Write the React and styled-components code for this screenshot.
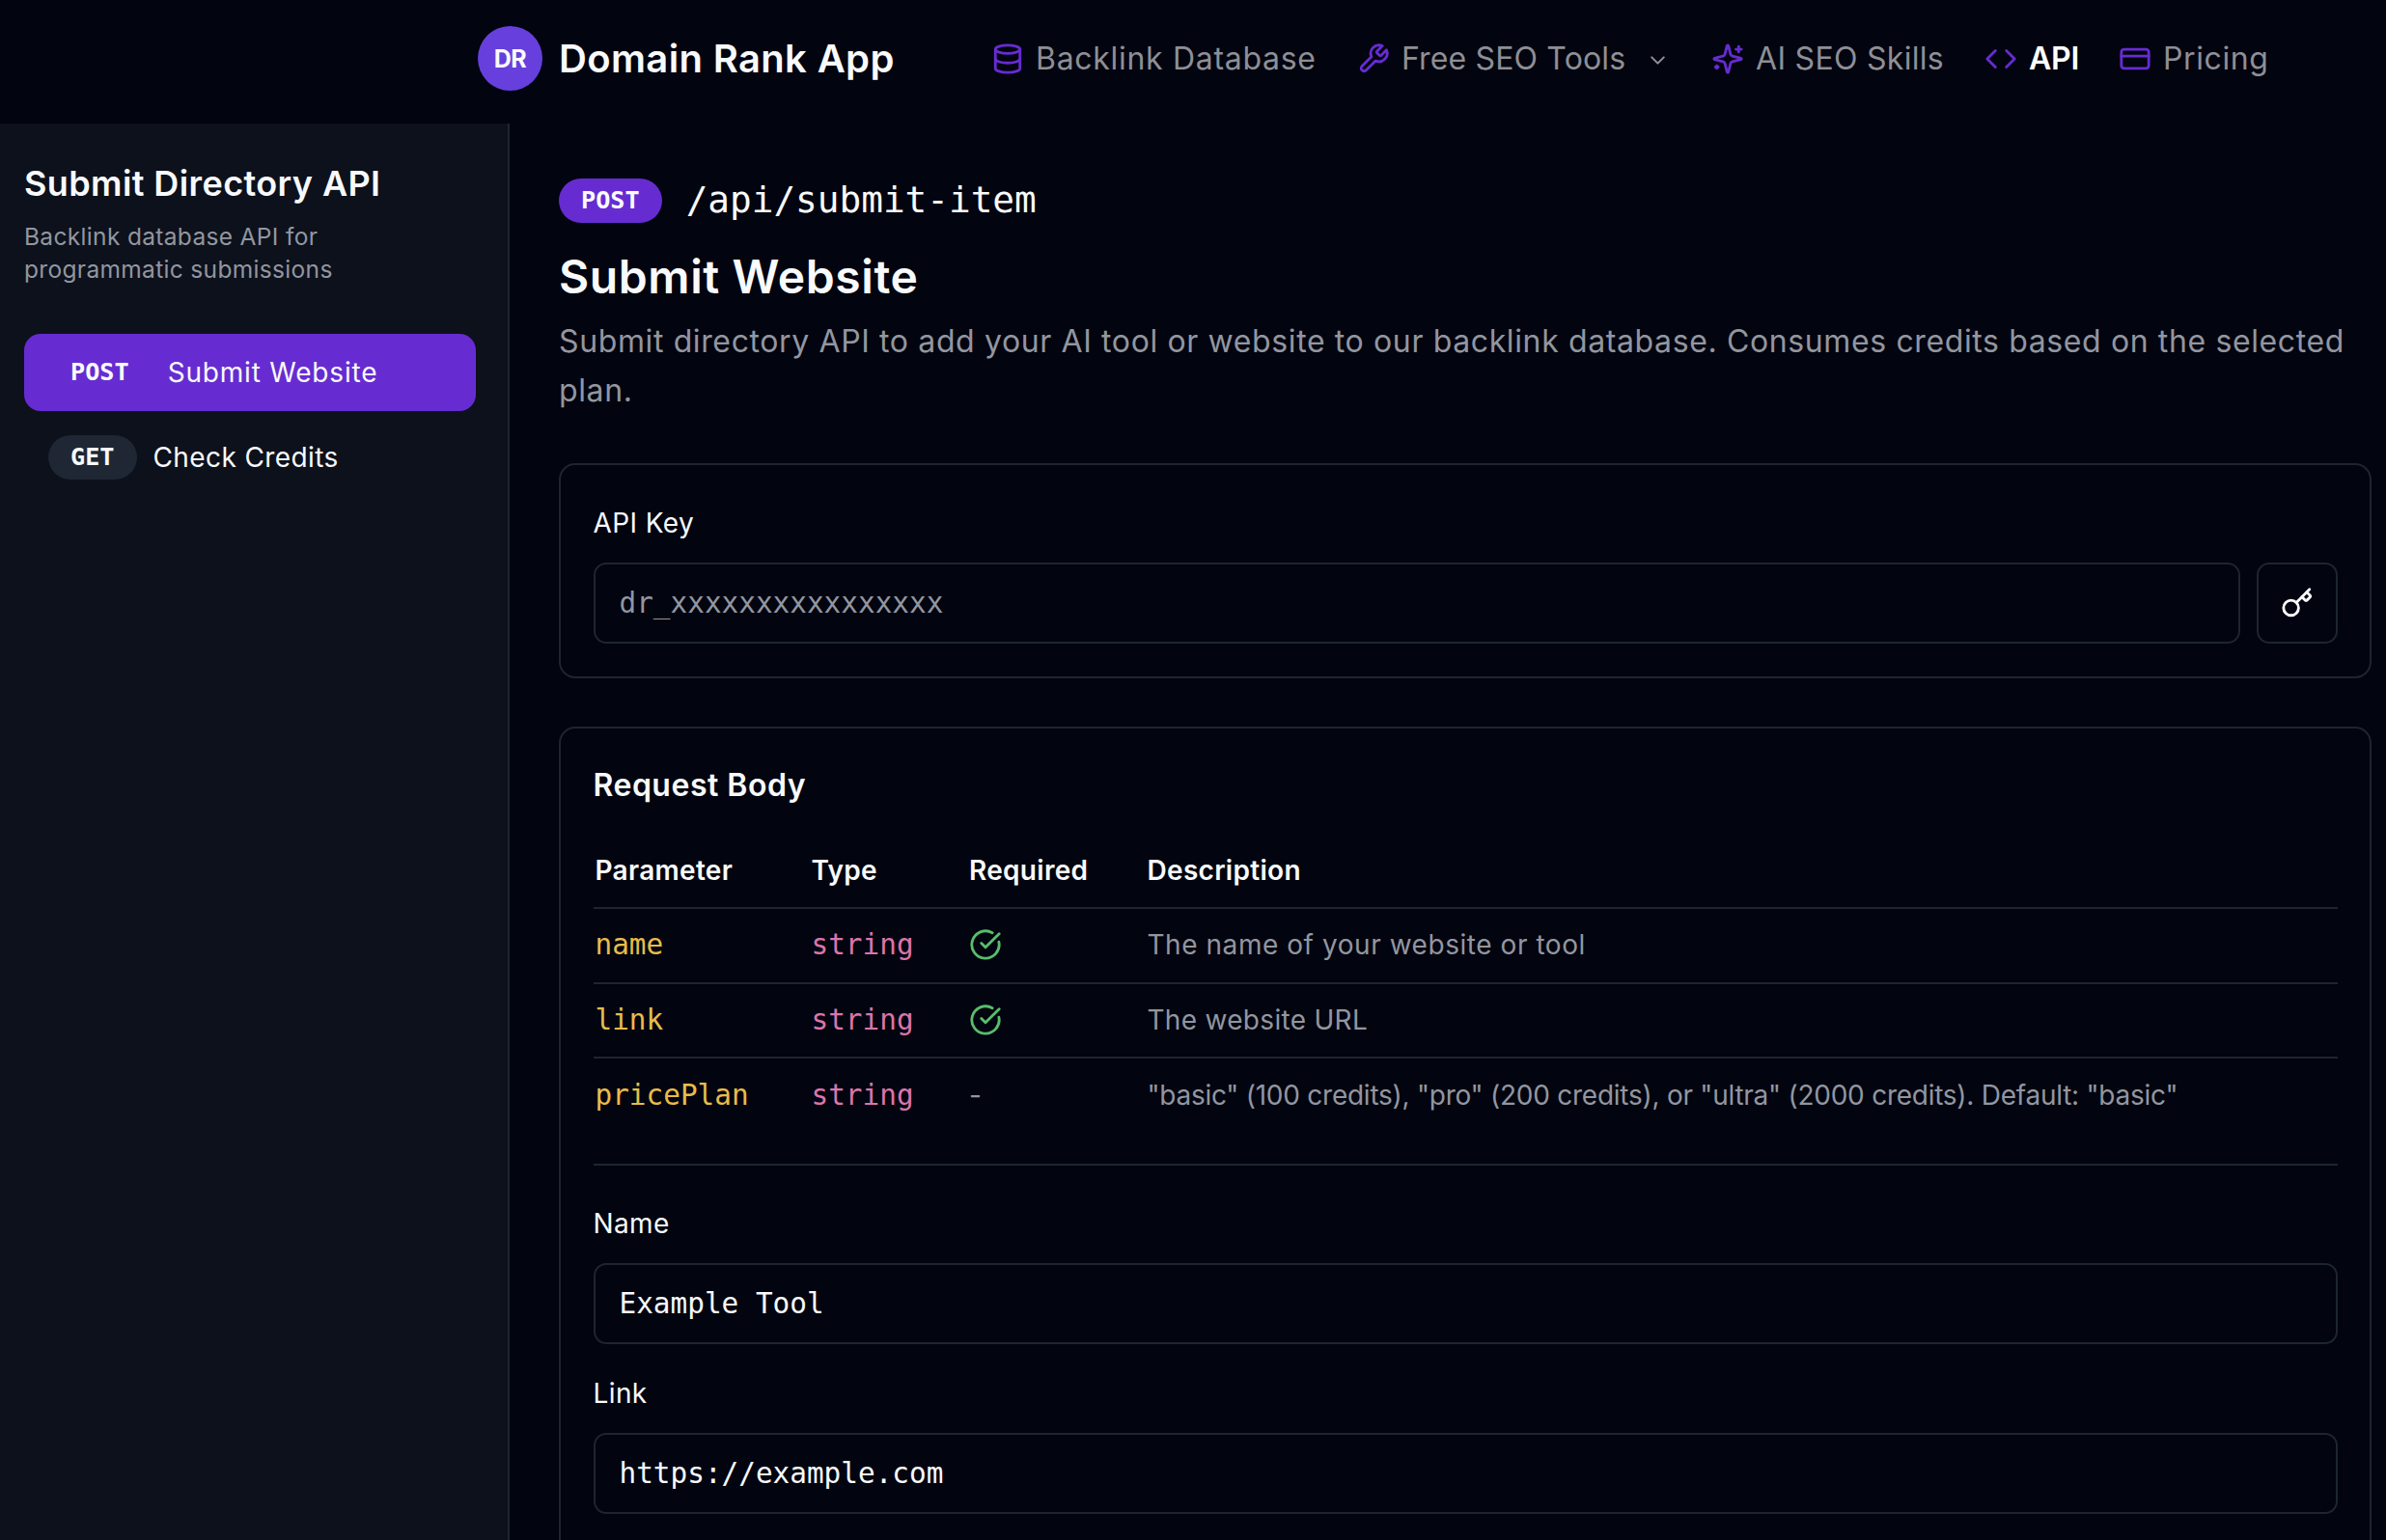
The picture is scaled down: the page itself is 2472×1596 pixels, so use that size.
import React from 'react';
import styled, { createGlobalStyle } from 'styled-components';
import { Database, Code, CreditCard, ChevronDown, CircleCheckBig, Key } from 'lucide-react';

const colors = {
  bg: '#02040f',
  panel: '#0d111b',
  border: '#1e2530',
  purple: '#662cd1',
  text: '#f8fafc',
  muted: '#9296a0',
  nav: '#8e8f96',
};

const mono = '"DejaVu Sans Mono", "Liberation Mono", monospace';

const GlobalStyle = createGlobalStyle`
  * { box-sizing: border-box; }
  html, body { margin: 0; background: ${colors.bg}; overflow: hidden; }
  body {
    color: ${colors.text};
    font-family: Inter, "Liberation Sans", sans-serif;
    font-size: 28px;
    -webkit-font-smoothing: antialiased;
  }
  h1, h2, p { margin: 0; }
`;

const Page = styled.div`
  height: 1596px;
  display: flex;
  flex-direction: column;
  overflow: hidden;
`;

const Header = styled.header`
  height: 128px;
  flex-shrink: 0;
  display: flex;
  align-items: center;
  padding: 0 0 7px 495px;
`;

const LogoMark = styled.div`
  width: 67px;
  height: 67px;
  border-radius: 50%;
  background: #673fdd;
  display: flex;
  align-items: center;
  justify-content: center;
  font-size: 25px;
  font-weight: 700;
  letter-spacing: -0.5px;
`;

const Brand = styled.div`
  width: 465px;
  padding-left: 17px;
  font-size: 40px;
  font-weight: 600;
  letter-spacing: 0.35px;
  white-space: nowrap;
`;

const Nav = styled.nav`
  display: flex;
  align-items: center;
`;

const NavItem = styled.a`
  width: ${(p) => p.$w}px;
  display: flex;
  align-items: center;
  gap: 12px;
  font-size: 32px;
  font-weight: ${(p) => (p.$active ? 600 : 400)};
  color: ${(p) => (p.$active ? '#ffffff' : colors.nav)};
  letter-spacing: ${(p) => p.$ls || 0}px;
  white-space: nowrap;
  svg { flex-shrink: 0; color: ${colors.purple}; }
  svg:last-child { color: ${colors.nav}; margin: 4px 0 0 9px; }
`;

const Body = styled.div`
  flex: 1;
  display: flex;
  min-height: 0;
`;

const Sidebar = styled.aside`
  width: 528px;
  flex-shrink: 0;
  background: ${colors.panel};
  border-right: 2px solid ${colors.border};
  padding: 38px 33px 0 25px;
`;

const SidebarTitle = styled.h2`
  font-size: 36px;
  line-height: 48px;
  font-weight: 600;
  letter-spacing: 0.4px;
  white-space: nowrap;
`;

const SidebarText = styled.p`
  margin-top: 15px;
  font-size: 24.5px;
  line-height: 33.5px;
  letter-spacing: 0.33px;
  color: ${colors.muted};
`;

const Menu = styled.div`
  margin-top: 50px;
  display: flex;
  flex-direction: column;
  gap: 8px;
`;

const MenuItem = styled.div`
  height: 80px;
  display: flex;
  align-items: center;
  gap: 17px;
  padding: 0 25px;
  border-radius: 17px;
  letter-spacing: ${(p) => (p.$active ? 0.8 : 0.4)}px;
  background: ${(p) => (p.$active ? colors.purple : 'transparent')};
`;

const Badge = styled.span`
  height: 46px;
  padding: 0 23px 1px;
  border-radius: 23px;
  display: inline-flex;
  align-items: center;
  background: ${(p) => p.$bg || colors.purple};
  font-family: ${mono};
  font-size: 25.2px;
  font-weight: 700;
  letter-spacing: 0;
`;

const Main = styled.main`
  flex: 1;
  padding: 56px 15px 0 51px;
  min-width: 0;
`;

const Endpoint = styled.div`
  display: flex;
  align-items: center;
  gap: 25px;
  height: 47px;
`;

const Path = styled.span`
  padding-bottom: 2px;
  font-family: ${mono};
  font-size: 37.7px;
`;

const Title = styled.h1`
  margin-top: 26px;
  font-size: 48px;
  line-height: 60px;
  font-weight: 600;
  letter-spacing: 0.6px;
`;

const Lead = styled.p`
  margin-top: 12px;
  font-size: 32px;
  line-height: 50.5px;
  letter-spacing: 0.62px;
  white-space: nowrap;
  color: ${colors.muted};
`;

const Card = styled.section`
  margin-top: 50px;
  height: ${(p) => p.$h}px;
  padding: 0 33.5px;
  border: 2px solid ${colors.border};
  border-radius: 17px;
`;

const Label = styled.label`
  display: block;
  margin-top: ${(p) => p.$top}px;
  height: 42px;
  line-height: 42px;
  letter-spacing: 0.4px;
`;

const InputRow = styled.div`
  display: flex;
  gap: 17px;
  margin-top: 20px;
`;

const Input = styled.input`
  flex: 1;
  height: 84px;
  padding: 0 25px;
  border: 2px solid ${colors.border};
  border-radius: 13px;
  background: transparent;
  outline: none;
  color: ${colors.text};
  font-family: ${mono};
  font-size: 29.37px;
  &::placeholder { color: ${colors.muted}; opacity: 1; }
`;

const IconButton = styled.button`
  width: 84px;
  height: 84px;
  display: flex;
  align-items: center;
  justify-content: center;
  border: 2px solid ${colors.border};
  border-radius: 13px;
  background: transparent;
  color: ${colors.text};
`;

const CardTitle = styled.h2`
  margin-top: 38px;
  font-size: 32px;
  line-height: 42px;
  font-weight: 600;
  letter-spacing: 0.5px;
`;

const Table = styled.div`
  margin-top: 29px;
`;

const Row = styled.div`
  display: grid;
  grid-template-columns: 224px 163.5px 184.5px 1fr;
  align-items: center;
  height: ${(p) => (p.$head ? 78 : 77.7)}px;
  padding: 0 0 ${(p) => (p.$head ? 0 : 1)}px 2px;
  border-bottom: 2px solid ${(p) => (p.$last ? 'transparent' : colors.border)};
  color: ${colors.muted};
`;

const HeadCell = styled.span`
  font-weight: 600;
  letter-spacing: 0.3px;
  color: ${colors.text};
`;

const CodeCell = styled.code`
  font-family: ${mono};
  font-size: 29.37px;
  color: ${(p) => p.$color};
`;

const Cell = styled.span`
  display: flex;
  align-items: center;
  white-space: nowrap;
  letter-spacing: ${(p) => p.$ls || 0}px;
  svg { color: #58bd6c; }
`;

const Divider = styled.div`
  height: 2px;
  margin-top: 31px;
  background: ${colors.border};
`;

const StrokeIcon = ({ size, children }) => (
  <svg
    width={size}
    height={size}
    viewBox="0 0 24 24"
    fill="none"
    stroke="currentColor"
    strokeWidth="2"
    strokeLinecap="round"
    strokeLinejoin="round"
  >
    {children}
  </svg>
);

const WrenchIcon = ({ size }) => (
  <StrokeIcon size={size}>
    <path d="M14.7 6.3a1 1 0 0 0 0 1.4l1.6 1.6a1 1 0 0 0 1.4 0l3.77-3.77a6 6 0 0 1-7.94 7.94l-6.91 6.91a2.12 2.12 0 0 1-3-3l6.91-6.91a6 6 0 0 1 7.94-7.94l-3.76 3.76z" />
  </StrokeIcon>
);

const SparklesIcon = ({ size }) => (
  <StrokeIcon size={size}>
    <path d="M9.937 15.5A2 2 0 0 0 8.5 14.063l-6.135-1.582a.5.5 0 0 1 0-.962L8.5 9.936A2 2 0 0 0 9.937 8.5l1.582-6.135a.5.5 0 0 1 .963 0L14.063 8.5A2 2 0 0 0 15.5 9.937l6.135 1.581a.5.5 0 0 1 0 .964L15.5 14.063a2 2 0 0 0-1.437 1.437l-1.582 6.135a.5.5 0 0 1-.963 0z" />
    <path d="M20 3v4" />
    <path d="M22 5h-4" />
    <path d="M4 17v2" />
    <path d="M5 18H3" />
  </StrokeIcon>
);

const navItems = [
  { name: 'Backlink Database', icon: Database, w: 379, ls: 0.7 },
  { name: 'Free SEO Tools', icon: WrenchIcon, w: 367, ls: 0.15, menu: true },
  { name: 'AI SEO Skills', icon: SparklesIcon, w: 283, ls: 0.3 },
  { name: 'API', icon: Code, w: 139, ls: -0.2, active: true },
  { name: 'Pricing', icon: CreditCard, w: 180, ls: 0.6 },
];

const params = [
  { name: 'name', type: 'string', required: true, ls: 0.55, description: 'The name of your website or tool' },
  { name: 'link', type: 'string', required: true, ls: 0.3, description: 'The website URL' },
  {
    name: 'pricePlan',
    type: 'string',
    required: false,
    ls: -0.25,
    description: '"basic" (100 credits), "pro" (200 credits), or "ultra" (2000 credits). Default: "basic"',
  },
];

const App = () => {
  return (
    <Page>
      <GlobalStyle />
      <Header>
        <LogoMark>DR</LogoMark>
        <Brand>Domain Rank App</Brand>
        <Nav>
          {navItems.map(({ name, icon: Icon, w, ls, menu, active }) => (
            <NavItem key={name} $w={w} $ls={ls} $active={active}>
              <Icon size={34} />
              <span>{name}</span>
              {menu && <ChevronDown size={25} strokeWidth={2} />}
            </NavItem>
          ))}
        </Nav>
      </Header>
      <Body>
        <Sidebar>
          <SidebarTitle>Submit Directory API</SidebarTitle>
          <SidebarText>Backlink database API for<br />programmatic submissions</SidebarText>
          <Menu>
            <MenuItem $active>
              <Badge>POST</Badge>
              <span>Submit Website</span>
            </MenuItem>
            <MenuItem>
              <Badge $bg="#1e2733">GET</Badge>
              <span>Check Credits</span>
            </MenuItem>
          </Menu>
        </Sidebar>
        <Main>
          <Endpoint>
            <Badge>POST</Badge>
            <Path>/api/submit-item</Path>
          </Endpoint>
          <Title>Submit Website</Title>
          <Lead>
            Submit directory API to add your AI tool or website to our backlink database. Consumes credits based on the selected<br />plan.
          </Lead>
          <Card $h={223}>
            <Label $top={39}>API Key</Label>
            <InputRow>
              <Input placeholder="dr_xxxxxxxxxxxxxxxx" />
              <IconButton><Key size={34} /></IconButton>
            </InputRow>
          </Card>
          <Card $h={1000}>
            <CardTitle>Request Body</CardTitle>
            <Table>
              <Row $head>
                <HeadCell>Parameter</HeadCell>
                <HeadCell>Type</HeadCell>
                <HeadCell>Required</HeadCell>
                <HeadCell>Description</HeadCell>
              </Row>
              {params.map((item, index) => (
                <Row key={item.name} $last={index === params.length - 1}>
                  <CodeCell $color="#e8bc4a">{item.name}</CodeCell>
                  <CodeCell $color="#db74ac">{item.type}</CodeCell>
                  <Cell>{item.required ? <CircleCheckBig size={34} /> : '-'}</Cell>
                  <Cell $ls={item.ls}>{item.description}</Cell>
                </Row>
              ))}
            </Table>
            <Divider />
            <Label $top={39}>Name</Label>
            <InputRow>
              <Input defaultValue="Example Tool" />
            </InputRow>
            <Label $top={30}>Link</Label>
            <InputRow>
              <Input defaultValue="https://example.com" />
            </InputRow>
          </Card>
        </Main>
      </Body>
    </Page>
  );
};

export default App;
